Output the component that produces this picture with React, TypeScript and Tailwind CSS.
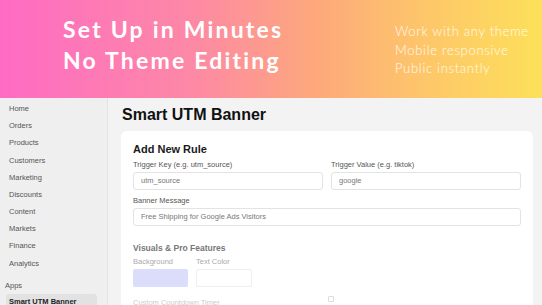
import React from 'react';

const navItems = ['Home', 'Orders', 'Products', 'Customers', 'Marketing', 'Discounts', 'Content', 'Markets', 'Finance', 'Analytics'];

const Field: React.FC<{ label: string; value: string }> = ({ label, value }) => (
  <div className="flex-1">
    <div className="text-[7.5px] text-[#555] mb-[2px] leading-[10px]">{label}</div>
    <div className="h-[18px] rounded-[3px] border border-[#e3e3e3] bg-white px-[7px] flex items-center text-[7.5px] text-[#777]">
      {value}
    </div>
  </div>
);

export default function App() {
  return (
    <div className="w-[542px] h-[305px] overflow-hidden bg-[#f3f3f4] font-['Liberation_Sans',Arial,sans-serif]">
      {/* Promo banner */}
      <div className="h-[98px] flex items-center bg-[linear-gradient(90deg,#fe6bc4_0%,#fd88a6_35%,#fda87c_58%,#fdc66a_78%,#fde05a_100%)]">
        <div className="pl-[63px] w-[395px] pb-[8px] font-['Lato',sans-serif] font-bold text-white text-[23px] leading-[31px] tracking-[2.2px]">
          <div>Set Up in Minutes</div>
          <div>No Theme Editing</div>
        </div>
        <div className="font-['Lato',sans-serif] font-light text-white/90 text-[13px] leading-[18.5px] tracking-[0.7px] pt-[2px]">
          <div>Work with any theme</div>
          <div>Mobile responsive</div>
          <div>Public instantly</div>
        </div>
      </div>

      <div className="flex h-[207px]">
        {/* Sidebar */}
        <div className="w-[108px] shrink-0 bg-[#efefef] border-r border-[#e4e4e4] pt-[2px]">
          {navItems.map((item) => (
            <div key={item} className="h-[17.2px] pl-[9px] flex items-center text-[7.5px] text-[#555]">
              {item}
            </div>
          ))}
          <div className="pl-[5px] mt-[5px] h-[17px] flex items-center text-[7.5px] text-[#555]">Apps</div>
          <div className="ml-[6px] mr-[10px] h-[16px] rounded-[3px] bg-[#e2e2e2] pl-[3px] flex items-center text-[7.5px] font-bold text-[#222]">
            Smart UTM Banner
          </div>
        </div>

        {/* Main */}
        <div className="flex-1 pl-[13px] pr-[9px]">
          <div className="h-[33px] flex items-center text-[16px] font-bold text-[#111] pl-[1px]">Smart UTM Banner</div>
          <div className="rounded-[6px] bg-white px-[12px] pt-[11px] h-[200px]">
            <div className="text-[11px] font-bold text-[#1a1a1a] leading-[14px] mb-[4px]">Add New Rule</div>
            <div className="flex gap-[8px]">
              <Field label="Trigger Key (e.g. utm_source)" value="utm_source" />
              <Field label="Trigger Value (e.g. tiktok)" value="google" />
            </div>
            <div className="mt-[6px]">
              <Field label="Banner Message" value="Free Shipping for Google Ads Visitors" />
            </div>
            <div className="mt-[17px] text-[8.5px] font-bold text-[#777] leading-[11px]">Visuals &amp; Pro Features</div>
            <div className="flex gap-[8px] mt-[3px]">
              <div>
                <div className="text-[7.5px] text-[#aaa] leading-[10px] mb-[2px]">Background</div>
                <div className="w-[55px] h-[18px] rounded-[2px] bg-[#dcdcfb]" />
              </div>
              <div>
                <div className="text-[7.5px] text-[#aaa] leading-[10px] mb-[2px]">Text Color</div>
                <div className="w-[56px] h-[18px] rounded-[2px] border border-[#eee] bg-white" />
              </div>
            </div>
            <div className="flex items-center mt-[11px]">
              <div className="text-[7.5px] text-[#ccc] leading-[10px]">Custom Countdown Timer</div>
              <div className="ml-[108px] -mt-[9px] w-[6px] h-[6px] rounded-[1px] border border-[#ddd]" />
            </div>
          </div>
        </div>
      </div>
    </div>
  );
}
